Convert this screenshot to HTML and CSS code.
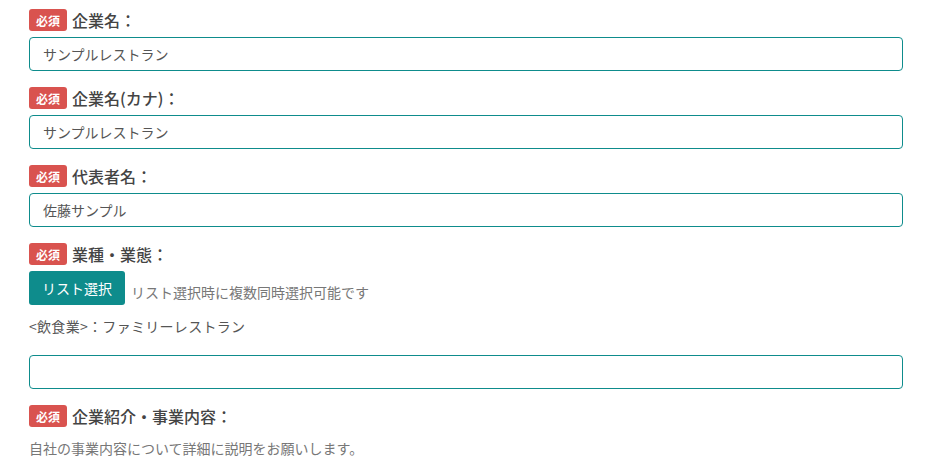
FILE: index.html
```html
<!DOCTYPE html>
<html lang="ja">
<head>
<meta charset="utf-8">
<link rel="stylesheet" href="styles.css">
</head>
<body>
<form class="form">
  <div class="field">
    <div class="label-row"><span class="badge">必須</span><span class="label">企業名：</span></div>
    <div class="input">サンプルレストラン</div>
  </div>
  <div class="field">
    <div class="label-row"><span class="badge">必須</span><span class="label">企業名(カナ)：</span></div>
    <div class="input">サンプルレストラン</div>
  </div>
  <div class="field">
    <div class="label-row"><span class="badge">必須</span><span class="label">代表者名：</span></div>
    <div class="input">佐藤サンプル</div>
  </div>
  <div class="field">
    <div class="label-row"><span class="badge">必須</span><span class="label">業種・業態：</span></div>
    <div class="select-row"><span class="btn">リスト選択</span><span class="hint">リスト選択時に複数同時選択可能です</span></div>
    <div class="selected">&lt;飲食業&gt;：ファミリーレストラン</div>
    <div class="input"></div>
  </div>
  <div class="field">
    <div class="label-row"><span class="badge">必須</span><span class="label">企業紹介・事業内容：</span></div>
    <div class="desc">自社の事業内容について詳細に説明をお願いします。</div>
  </div>
</form>
</body>
</html>
```
FILE: styles.css
```css
* { box-sizing: border-box; }
body {
  margin: 0;
  background: #fff;
  font-family: "Noto Sans CJK JP", "Noto Sans", sans-serif;
  color: #444;
}
.form {
  padding: 9px 29px 0 29px;
  width: 932px;
}
.field {
  margin-bottom: 16px;
}
.label-row {
  display: flex;
  align-items: center;
  gap: 5px;
  height: 22px;
  margin-bottom: 6px;
}
.badge {
  display: inline-flex;
  align-items: center;
  justify-content: center;
  width: 38px;
  height: 22px;
  background: #d9534f;
  color: #fff;
  font-size: 12px;
  font-weight: 700;
  border-radius: 3px;
}
.label {
  font-size: 16px;
  font-weight: 500;
  color: #444;
}
.input {
  height: 34px;
  width: 874px;
  border: 1px solid #0e8c8c;
  border-radius: 4px;
  padding: 0 13px;
  display: flex;
  align-items: center;
  font-size: 14px;
  color: #555;
}
.select-row {
  display: flex;
  align-items: flex-end;
  gap: 6px;
}
.btn {
  display: inline-flex;
  align-items: center;
  justify-content: center;
  width: 96px;
  height: 34px;
  background: #0e8c8c;
  color: #fff;
  border-radius: 3px;
  font-size: 14px;
}
.hint {
  font-size: 14px;
  color: #777;
  line-height: 20px;
  margin-bottom: 3px;
}
.selected {
  font-size: 14px;
  color: #555;
  line-height: 20px;
  margin: 11px 0 19px;
  letter-spacing: 0.3px;
}
.desc {
  font-size: 14px;
  color: #777;
  line-height: 20px;
  margin-top: 11px;
}
```
